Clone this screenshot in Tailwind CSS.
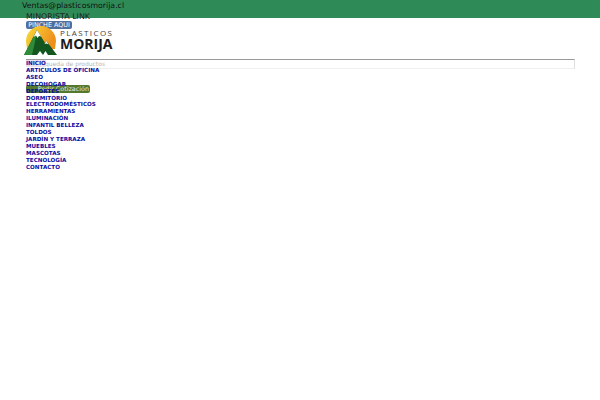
<!DOCTYPE html>
<html lang="es">
<head>
    <meta charset="UTF-8">
    <title>Plasticos Morija</title>
    <script src="https://cdn.jsdelivr.net/npm/@tailwindcss/browser@4"></script>
</head>
<body class="bg-white font-['DejaVu_Sans',sans-serif] overflow-hidden">
    <div class="relative w-[600px] h-[400px]">
        <!-- top bar -->
        <div class="h-[18px] bg-[#2e8b57] pl-[22px]">
            <div class="text-[7.800px] leading-[10px] pt-[0.500px] text-[#111]">Ventas@plasticosmorija.cl</div>
        </div>

        <!-- things that overlap each other in the original page -->
        <div class="absolute left-[26px] top-[11.500px] text-[7.900px] leading-[10px] text-[#222] whitespace-nowrap">MINORISTA LINK</div>
        <a class="absolute left-[26px] top-[21px] h-[8px] w-[46px] rounded-[2px] bg-[#4f709f] text-[6.400px] leading-[8px] text-white text-center whitespace-nowrap">PINCHE AQUI</a>

        <!-- logo -->
        <div class="absolute left-[24px] top-[24px] w-[92px] h-[32px]">
            <svg class="absolute left-0 top-0" width="34" height="32" viewBox="0 0 34 32">
                <defs>
                    <linearGradient id="sun" x1="0" y1="0" x2="1" y2="0.400">
                        <stop offset="0" stop-color="#f7dc3a"/>
                        <stop offset="1" stop-color="#ef8f1c"/>
                    </linearGradient>
                </defs>
                <path d="M2 17a15 15 0 1 1 30 0l-1 8H3z" fill="url(#sun)"/>
                <path d="M0 31 L13 6 L21 19 L22.500 17 L33 31 L24 31 L21.500 27 L19 31 L16 27 L13 31Z" fill="#14561f"/>
                <path d="M0 31 L13 6 L11 18 L8 31Z" fill="#2f8a3a"/>
                <path d="M13 6 L9.500 13 L12 11.500 L13.500 14 L15 12 L17 12.500Z" fill="#fff"/>
                <path d="M22.500 17 L20.500 20 L22.500 19.500 L24.500 20.500Z" fill="#fff"/>
            </svg>
            <div class="absolute left-[36px] top-[5px] text-[8px] leading-[8px] tracking-[1.4px] text-[#444] font-['Open_Sans',sans-serif] whitespace-nowrap">PLASTICOS</div>
            <div class="absolute left-[36px] top-[13.500px] text-[14px] leading-[12px] font-bold text-[#1c1c1c] font-['Open_Sans',sans-serif]">MORIJA</div>
        </div>

        <!-- search -->
        <div class="absolute left-[26px] top-[59px] w-[549px] h-[10px] border-t border-t-[#999] border-r border-r-[#ddd] border-b border-b-[#eee] text-[6px] leading-[7px] text-[#b5b5b5] pl-[8px] whitespace-nowrap">Búsqueda de productos</div>

        <!-- cotizacion button -->
        <div class="absolute left-[26px] top-[85px] w-[64px] h-[8px] rounded-[2px] bg-[#55782f] text-[6.400px] leading-[8px] text-[#e8e8e0] pr-[1px] text-right whitespace-nowrap">Pedir Cotización</div>

        <!-- menu -->
        <nav class="absolute left-[26px] top-[60px] flex flex-col items-start text-[5.600px] leading-[6.900px] font-bold text-[#0c0c9e] whitespace-nowrap">
            <a class="bg-[#ece2ee]">INICIO</a>
            <a>ARTICULOS DE OFICINA</a>
            <a>ASEO</a>
            <a>DECOHOGAR</a>
            <a>DEPORTES</a>
            <a>DORMITORIO</a>
            <a>ELECTRODOMÉSTICOS</a>
            <a>HERRAMIENTAS</a>
            <a>ILUMINACIÓN</a>
            <a>INFANTIL BELLEZA</a>
            <a>TOLDOS</a>
            <a>JARDÍN Y TERRAZA</a>
            <a>MUEBLES</a>
            <a>MASCOTAS</a>
            <a>TECNOLOGÍA</a>
            <a>CONTACTO</a>
        </nav>
    </div>
</body>
</html>
